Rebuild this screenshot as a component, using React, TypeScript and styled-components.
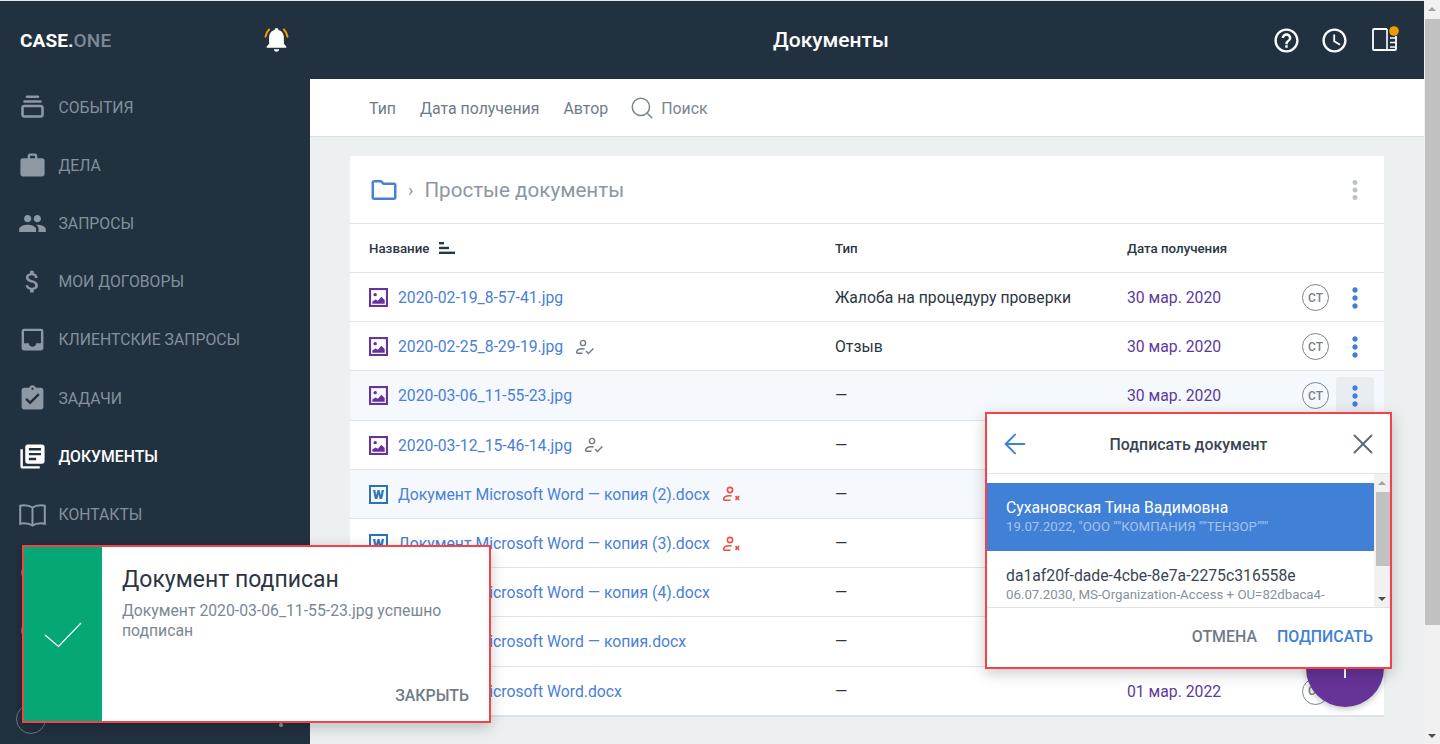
import React from 'react';
import styled, { createGlobalStyle } from 'styled-components';
import { ArrowLeft, Search, X } from 'lucide-react';
import {
  MdAccessTime,
  MdAssignmentTurnedIn,
  MdAttachMoney,
  MdHelpOutline,
  MdInbox,
  MdLibraryBooks,
  MdMoreVert,
  MdOutlineFolder,
  MdPeople,
  MdWork,
} from 'react-icons/md';

const GlobalStyle = createGlobalStyle`
  html, body { margin: 0; padding: 0; height: 100%; overflow: hidden; }
  body { font-family: Roboto, "Noto Sans", sans-serif; background: #ecf0f1; }
`;

const Shell = styled.div`
  position: relative;
  width: 1440px;
  height: 744px;
  display: flex;
  overflow: hidden;
  background: #ecf0f1;
`;

const App_ = styled.div`
  width: 1424px;
  height: 744px;
  display: flex;
  border-top: 1px solid #e6e8ea;
  box-sizing: border-box;
`;

const Sidebar = styled.aside`
  position: relative;
  width: 310px;
  flex: none;
  background: #223140;
  display: flex;
  flex-direction: column;
`;

const SideTop = styled.div`
  height: 78px;
  display: flex;
  align-items: center;
  justify-content: space-between;
  padding: 0 18px 0 20px;
  box-sizing: border-box;
  margin-bottom: -1px;
`;

const Logo = styled.div`
  font-size: 19px;
  font-weight: 700;
  color: #fff;
  letter-spacing: 0.1px;
  span { color: #7d8995; font-weight: 500; }
`;

const NavList = styled.nav`
  display: flex;
  flex-direction: column;
`;

const NavItem = styled.div<{ $active?: boolean }>`
  height: 58.2px;
  display: flex;
  align-items: center;
  gap: 11.5px;
  padding-left: 18px;
  font-size: 15.75px;
  text-transform: uppercase;
  color: ${p => (p.$active ? '#fff' : '#84909b')};
  font-weight: ${p => (p.$active ? 500 : 400)};
  svg { flex: none; width: 29px; height: 29px; color: ${p => (p.$active ? '#fff' : '#8e98a3')}; }
`;

const UserCircle = styled.div`
  position: absolute;
  left: 16px;
  bottom: 10px;
  width: 28px;
  height: 28px;
  border: 1px solid #6d7985;
  border-radius: 50%;
`;

const UserDot = styled.div`
  position: absolute;
  left: 279px;
  bottom: 17px;
  width: 4px;
  height: 4px;
  background: #8e98a3;
  border-radius: 50%;
`;

const MainColumn = styled.div`
  flex: 1;
  min-width: 0;
  display: flex;
  flex-direction: column;
`;

const TopBar = styled.header`
  height: 78px;
  flex: none;
  background: #223140;
  display: flex;
  align-items: center;
  padding-left: 463px;
  padding-right: 25px;
  color: #fff;
`;

const PageTitle = styled.h1`
  margin: 0;
  font-size: 21px;
  font-weight: 500;
`;

const TopIcons = styled.div`
  margin-left: auto;
  display: flex;
  align-items: center;
  gap: 19px;
  svg { display: block; }
  svg:last-child { margin-left: 3px; }
`;

const FilterBar = styled.div`
  height: 58px;
  flex: none;
  box-sizing: border-box;
  background: #fff;
  border-bottom: 1px solid #d9dfe4;
  display: flex;
  align-items: center;
  gap: 24px;
  padding-left: 59px;
  padding-top: 1px;
  font-size: 15.9px;
  color: #6f7b87;
`;

const SearchBox = styled.div`
  display: flex;
  align-items: center;
  gap: 6px;
  color: #7a858f;
  svg { margin-left: -3px; }
`;

const Content = styled.main`
  flex: 1;
  padding: 19px 40px 0;
`;

const Card = styled.section`
  position: relative;
  background: #fff;
  border-bottom: 1px solid #dfe3e7;
`;

const CardHead = styled.div`
  height: 67px;
  display: flex;
  align-items: center;
  padding: 0 10px 0 19px;
  border-bottom: 1px solid #e0e4e8;
`;

const Crumb = styled.span`
  margin: 0 11px 0 9px;
  font-size: 18px;
  color: #8d969f;
`;

const CardTitle = styled.h2`
  margin: 0;
  font-size: 20.6px;
  font-weight: 400;
  color: #8d969f;
  flex: 1;
`;

const DotsButton = styled.div<{ $tone?: string; $hover?: boolean }>`
  width: 38px;
  height: 38px;
  display: flex;
  align-items: center;
  justify-content: center;
  border-radius: 3px;
  color: ${p => p.$tone || '#3f7fd6'};
  background: ${p => (p.$hover ? '#e9edf2' : 'transparent')};
`;

const grid = `
  display: grid;
  grid-template-columns: 466px 292px 175px 27px 1fr;
  align-items: center;
  padding-left: 19px;
  box-sizing: border-box;
  border-bottom: 1px solid #e0e4e8;
`;

const HeadRow = styled.div`
  ${grid}
  height: 49px;
  font-size: 13.3px;
  font-weight: 500;
  color: #2a3744;
`;

const HeadName = styled.div`
  display: flex;
  align-items: center;
  gap: 10px;
`;

const Row = styled.div<{ $tint?: boolean }>`
  ${grid}
  height: 49.2px;
  padding-top: 1px;
  font-size: 15.75px;
  color: #2b3642;
  background: ${p => (p.$tint ? '#f5f8fc' : '#fff')};
  &:last-of-type { border-bottom: none; }
`;

const NameCell = styled.div`
  display: flex;
  align-items: center;
  min-width: 0;
  white-space: nowrap;
`;

const FileLink = styled.span`
  margin-left: 10px;
  margin-right: 12px;
  color: #4a80d8;
`;

const WordIcon = styled.span`
  width: 19px;
  height: 19px;
  flex: none;
  box-sizing: border-box;
  border: 2px solid #2b72bd;
  display: flex;
  align-items: center;
  justify-content: center;
  font-size: 13px;
  font-weight: 900;
  color: #2b72bd;
  line-height: 1;
`;

const DateCell = styled.div`
  color: #5c3a9e;
`;

const Avatar = styled.div`
  width: 27px;
  height: 27px;
  box-sizing: border-box;
  border: 1px solid #79848f;
  border-radius: 50%;
  display: flex;
  align-items: center;
  justify-content: center;
  font-size: 12px;
  font-weight: 500;
  color: #75808b;
`;

const RowAction = styled.div`
  padding-left: 7px;
`;

const Fab = styled.div`
  position: absolute;
  right: 0;
  bottom: 9px;
  width: 78px;
  height: 78px;
  border-radius: 50%;
  background: #663399;
  display: flex;
  align-items: center;
  justify-content: center;
  box-shadow: 0 2px 6px rgba(0, 0, 0, 0.25);
`;

const PageScroll = styled.div`
  width: 16px;
  flex: none;
  background: #f1f1f1;
  display: flex;
  flex-direction: column;
  align-items: center;
  justify-content: space-between;
  padding: 7px 0 6px;
  box-sizing: border-box;
  position: relative;
`;

const ArrowUp = styled.div`
  width: 0;
  height: 0;
  border-left: 4px solid transparent;
  border-right: 4px solid transparent;
  border-bottom: 4px solid #a3a3a3;
`;

const ArrowDown = styled.div`
  width: 0;
  height: 0;
  border-left: 4px solid transparent;
  border-right: 4px solid transparent;
  border-top: 4px solid #505050;
`;

const PageThumb = styled.div`
  position: absolute;
  top: 19px;
  left: 1px;
  right: 0;
  height: 606px;
  background: #c1c1c1;
`;

const Toast = styled.div`
  position: absolute;
  left: 22px;
  top: 545px;
  width: 469px;
  height: 178px;
  box-sizing: border-box;
  border: 2px solid #f44347;
  background: #fff;
  display: flex;
  box-shadow: 0 4px 14px rgba(0, 0, 0, 0.22);
`;

const ToastSide = styled.div`
  width: 78px;
  flex: none;
  background: #05a875;
  display: flex;
  align-items: center;
  justify-content: center;
  padding-top: 2px;
  box-sizing: border-box;
`;

const ToastBody = styled.div`
  flex: 1;
  display: flex;
  flex-direction: column;
  padding: 19px 20px 16px 20px;
`;

const ToastTitle = styled.div`
  font-size: 23px;
  line-height: 28px;
  color: #2b3642;
`;

const ToastText = styled.div`
  margin-top: 6.5px;
  font-size: 15.75px;
  line-height: 20px;
  color: #7b8794;
`;

const TextButton = styled.div<{ $primary?: boolean }>`
  font-size: 15.9px;
  font-weight: 500;
  text-transform: uppercase;
  color: ${p => (p.$primary ? '#4080d6' : '#6f7b87')};
`;

const ToastActions = styled.div`
  margin-top: auto;
  display: flex;
  justify-content: flex-end;
`;

const Dialog = styled.div`
  position: absolute;
  left: 985px;
  top: 412px;
  width: 407px;
  height: 257px;
  box-sizing: border-box;
  border: 2px solid #f44347;
  background: #fff;
  display: flex;
  flex-direction: column;
  box-shadow: 0 4px 14px rgba(0, 0, 0, 0.22);
`;

const DialogHead = styled.div`
  height: 60px;
  flex: none;
  box-sizing: border-box;
  border-bottom: 1px solid #dfe3e7;
  display: flex;
  align-items: center;
  justify-content: space-between;
  padding: 0 10px 0 12px;
`;

const DialogTitle = styled.div`
  font-size: 15.9px;
  font-weight: 500;
  color: #3a4552;
  padding-top: 1px;
`;

const DialogBody = styled.div`
  height: 133px;
  flex: none;
  display: flex;
  overflow: hidden;
  border-bottom: 1px solid #dfe3e7;
  box-sizing: content-box;
`;

const CertList = styled.div`
  flex: 1;
  min-width: 0;
  padding-top: 9px;
`;

const CertItem = styled.div<{ $selected?: boolean }>`
  height: 68px;
  box-sizing: border-box;
  padding: 15px 19px 0;
  background: ${p => (p.$selected ? '#4080d6' : '#fff')};
  white-space: nowrap;
  overflow: hidden;
`;

const CertName = styled.div<{ $selected?: boolean }>`
  font-size: 15.75px;
  line-height: 20px;
  color: ${p => (p.$selected ? '#fff' : '#3a4552')};
`;

const CertSub = styled.div<{ $selected?: boolean }>`
  font-size: 13.25px;
  line-height: 17px;
  color: ${p => (p.$selected ? '#a5c3ec' : '#87919b')};
`;

const ListScroll = styled.div`
  position: relative;
  width: 16px;
  flex: none;
  background: #f1f1f1;
  display: flex;
  flex-direction: column;
  align-items: center;
  justify-content: space-between;
  padding: 7px 0 6px;
  box-sizing: border-box;
`;

const ListThumb = styled.div`
  position: absolute;
  top: 18px;
  left: 2px;
  right: 0;
  height: 74px;
  background: #c1c1c1;
`;

const DialogFoot = styled.div`
  flex: 1;
  display: flex;
  align-items: center;
  justify-content: flex-end;
  gap: 20px;
  padding: 0 17px 2px 0;
`;

const EventsIcon = () => (
  <svg viewBox="0 0 29 29" fill="none" stroke="currentColor" strokeWidth="2.6" strokeLinecap="round">
    <rect x="4.5" y="13" width="20" height="10.5" rx="2" />
    <path d="M6.5 8.5h16M9 3.8h11" />
  </svg>
);

const BookIcon = () => (
  <svg viewBox="0 0 29 29" fill="none" stroke="currentColor" strokeWidth="2">
    <path d="M14.5 7.5C12.5 6 9.5 5.2 6 5.2c-1.5 0-2.7.2-3.8.6v18c1.100-.4 2.300-.6 3.800-.6 3.500 0 6.500.8 8.500 2.300 2-1.500 5-2.300 8.500-2.300 1.500 0 2.700.2 3.800.6v-18c-1.100-.4-2.300-.6-3.800-.6-3.500 0-6.500.8-8.500 2.300zM14.500 7.500v18" />
  </svg>
);

const RingIcon = () => (
  <svg viewBox="0 0 29 29" fill="none" stroke="currentColor" strokeWidth="2.4">
    <circle cx="14.5" cy="14.5" r="10" />
  </svg>
);

const BellIcon = () => (
  <svg width="31" height="31" viewBox="0 0 26 26" fill="none">
    <path d="M3.800 9.800C4.200 7.400 5.200 5.400 6.800 3.800M22.200 9.800C21.800 7.400 20.800 5.400 19.200 3.800" stroke="#f59a00" strokeWidth="1.700" strokeLinecap="round" />
    <path
      d="M13 2.600c.9 0 1.500.6 1.600 1.500 3 .8 4.600 3.300 4.600 6.400v5.200l2 2.300v1H4.800v-1l2-2.300v-5.200c0-3.100 1.600-5.600 4.600-6.400.1-.9.700-1.500 1.600-1.500zM10.800 20.400h4.400c0 1-1 2-2.200 2s-2.200-1-2.200-2z"
      fill="#fff"
    />
  </svg>
);

const PanelIcon = () => (
  <svg width="28" height="28" viewBox="0 0 28 28" fill="none">
    <path d="M16 3H3A1 1 0 0 0 2 4V23a1 1 0 0 0 1 1h21a1 1 0 0 0 1-1V10" stroke="#fff" strokeWidth="1.800" />
    <path d="M16 3V24M19 12h6M19 16.500h6M19 21h6" stroke="#fff" strokeWidth="1.600" />
    <circle cx="23" cy="5" r="4.800" fill="#f59a00" />
  </svg>
);

const ImageFileIcon = () => (
  <svg width="19" height="19" viewBox="0 0 20 20" style={{ flex: 'none' }}>
    <rect x="1.100" y="1.100" width="17.800" height="17.800" fill="none" stroke="#663399" strokeWidth="2.200" />
    <circle cx="6.500" cy="7" r="1.800" fill="#663399" />
    <path d="M3.500 16.500v-2.200l3.400-2.200 2.500 1.400 3.600-4.200 3.500 3.400v3.800z" fill="#663399" />
  </svg>
);

const SignedIcon = () => (
  <svg width="20" height="16" viewBox="0 0 20 16" fill="none" stroke="#6f7b87" strokeWidth="1.400" style={{ flex: 'none' }}>
    <circle cx="8" cy="4" r="2.600" />
    <path d="M1.500 14c0-2.600 2.600-4.200 6-4.200 .8 0 1.500.1 2.100.2M1.500 14.200h6" />
    <path d="M11 12l2.400 2.400 5-5" />
  </svg>
);

const RejectedIcon = () => (
  <svg width="20" height="16" viewBox="0 0 20 16" fill="none" stroke="#e8504a" strokeWidth="1.600" style={{ flex: 'none' }}>
    <circle cx="8" cy="4" r="2.600" />
    <path d="M1.500 14c0-2.600 2.600-4.200 6-4.200 .8 0 1.500.1 2.100.2M1.500 14.200h7" />
    <path d="M13.500 10.200l3.600 3.600M17.100 10.200l-3.600 3.600" strokeWidth="1.800" />
  </svg>
);

const SortIcon = () => (
  <svg width="16" height="12" viewBox="0 0 16 12" fill="#2a3744">
    <rect x="0" y="0" width="5" height="2.400" />
    <rect x="0" y="4.800" width="10" height="2.400" />
    <rect x="0" y="9.600" width="16" height="2.400" />
  </svg>
);

type Doc = { name: string; kind: 'image' | 'word'; badge?: 'ok' | 'bad'; type: string; date: string; tint?: boolean; hover?: boolean };

const docs: Doc[] = [
  { name: '2020-02-19_8-57-41.jpg', kind: 'image', type: 'Жалоба на процедуру проверки', date: '30 мар. 2020' },
  { name: '2020-02-25_8-29-19.jpg', kind: 'image', badge: 'ok', type: 'Отзыв', date: '30 мар. 2020' },
  { name: '2020-03-06_11-55-23.jpg', kind: 'image', type: '—', date: '30 мар. 2020', tint: true, hover: true },
  { name: '2020-03-12_15-46-14.jpg', kind: 'image', badge: 'ok', type: '—', date: '30 мар. 2020' },
  { name: 'Документ Microsoft Word — копия (2).docx', kind: 'word', badge: 'bad', type: '—', date: '01 мар. 2022', tint: true },
  { name: 'Документ Microsoft Word — копия (3).docx', kind: 'word', badge: 'bad', type: '—', date: '01 мар. 2022' },
  { name: 'Документ Microsoft Word — копия (4).docx', kind: 'word', type: '—', date: '01 мар. 2022' },
  { name: 'Документ Microsoft Word — копия.docx', kind: 'word', type: '—', date: '01 мар. 2022' },
  { name: 'Документ Microsoft Word.docx', kind: 'word', type: '—', date: '01 мар. 2022' },
];

const nav = [
  { label: 'События', icon: <EventsIcon /> },
  { label: 'Дела', icon: <MdWork /> },
  { label: 'Запросы', icon: <MdPeople /> },
  { label: 'Мои договоры', icon: <MdAttachMoney /> },
  { label: 'Клиентские запросы', icon: <MdInbox /> },
  { label: 'Задачи', icon: <MdAssignmentTurnedIn /> },
  { label: 'Документы', icon: <MdLibraryBooks />, active: true },
  { label: 'Контакты', icon: <BookIcon /> },
  { label: '', icon: <RingIcon /> },
  { label: '', icon: <RingIcon /> },
];

export default function App() {
  return (
    <Shell>
      <GlobalStyle />
      <App_>
        <Sidebar>
          <SideTop>
            <Logo>
              CASE.<span>ONE</span>
            </Logo>
            <BellIcon />
          </SideTop>
          <NavList>
            {nav.map((item, i) => (
              <NavItem key={i} $active={item.active}>
                {item.icon}
                {item.label}
              </NavItem>
            ))}
          </NavList>
          <UserCircle />
          <UserDot />
        </Sidebar>
        <MainColumn>
          <TopBar>
            <PageTitle>Документы</PageTitle>
            <TopIcons>
              <MdHelpOutline size={29} />
              <MdAccessTime size={29} />
              <PanelIcon />
            </TopIcons>
          </TopBar>
          <FilterBar>
            <span>Тип</span>
            <span>Дата получения</span>
            <span>Автор</span>
            <SearchBox>
              <Search size={26} strokeWidth={1.4} />
              Поиск
            </SearchBox>
          </FilterBar>
          <Content>
            <Card>
              <CardHead>
                <MdOutlineFolder size={30} color="#4a80d8" />
                <Crumb>›</Crumb>
                <CardTitle>Простые документы</CardTitle>
                <DotsButton $tone="#b9c1c9">
                  <MdMoreVert size={30} />
                </DotsButton>
              </CardHead>
              <HeadRow>
                <HeadName>
                  Название <SortIcon />
                </HeadName>
                <div>Тип</div>
                <div>Дата получения</div>
              </HeadRow>
              {docs.map(doc => (
                <Row key={doc.name} $tint={doc.tint}>
                  <NameCell>
                    {doc.kind === 'image' ? <ImageFileIcon /> : <WordIcon>W</WordIcon>}
                    <FileLink>{doc.name}</FileLink>
                    {doc.badge === 'ok' && <SignedIcon />}
                    {doc.badge === 'bad' && <RejectedIcon />}
                  </NameCell>
                  <div>{doc.type}</div>
                  <DateCell>{doc.date}</DateCell>
                  <Avatar>СТ</Avatar>
                  <RowAction>
                    <DotsButton $hover={doc.hover}>
                      <MdMoreVert size={32} />
                    </DotsButton>
                  </RowAction>
                </Row>
              ))}
              <Fab>
                <svg width="20" height="20" viewBox="0 0 20 20" stroke="#fff" strokeWidth="2">
                  <path d="M10 0v20M0 10h20" />
                </svg>
              </Fab>
            </Card>
          </Content>
        </MainColumn>
      </App_>
      <PageScroll>
        <ArrowUp />
        <PageThumb />
        <ArrowDown />
      </PageScroll>

      <Toast>
        <ToastSide>
          <svg width="38" height="26" viewBox="0 0 38 26" fill="none" stroke="#fff" strokeWidth="1.200">
            <path d="M1 13l13.500 11.500L37 1" />
          </svg>
        </ToastSide>
        <ToastBody>
          <ToastTitle>Документ подписан</ToastTitle>
          <ToastText>Документ 2020-03-06_11-55-23.jpg успешно подписан</ToastText>
          <ToastActions>
            <TextButton>Закрыть</TextButton>
          </ToastActions>
        </ToastBody>
      </Toast>

      <Dialog>
        <DialogHead>
          <ArrowLeft size={32} color="#4080d6" strokeWidth={1.5} />
          <DialogTitle>Подписать документ</DialogTitle>
          <X size={34} color="#5f6b77" strokeWidth={1.4} />
        </DialogHead>
        <DialogBody>
          <CertList>
            <CertItem $selected>
              <CertName $selected>Сухановская Тина Вадимовна</CertName>
              <CertSub $selected>19.07.2022, "ООО ""КОМПАНИЯ ""ТЕНЗОР"""</CertSub>
            </CertItem>
            <CertItem>
              <CertName>da1af20f-dade-4cbe-8e7a-2275c316558e</CertName>
              <CertSub>06.07.2030, MS-Organization-Access + OU=82dbaca4-</CertSub>
            </CertItem>
          </CertList>
          <ListScroll>
            <ArrowUp />
            <ListThumb />
            <ArrowDown />
          </ListScroll>
        </DialogBody>
        <DialogFoot>
          <TextButton>Отмена</TextButton>
          <TextButton $primary>Подписать</TextButton>
        </DialogFoot>
      </Dialog>
    </Shell>
  );
}
